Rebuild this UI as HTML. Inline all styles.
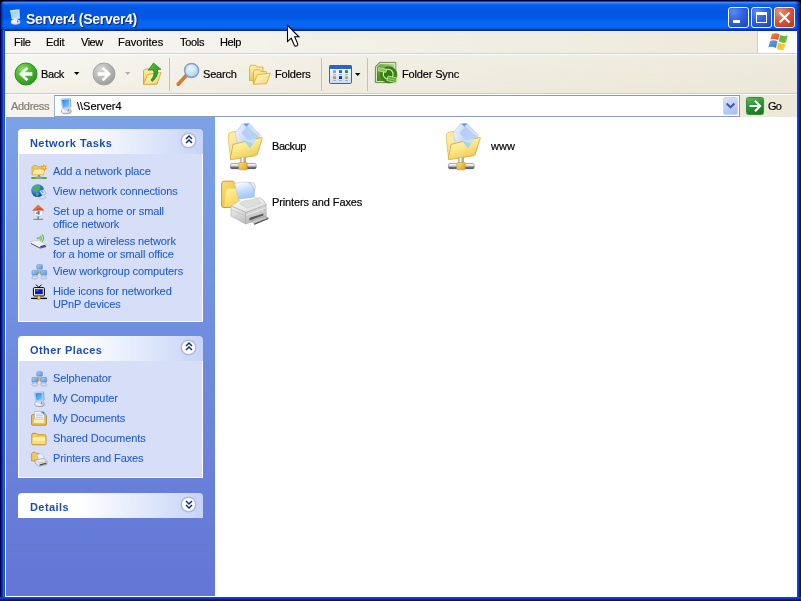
<!DOCTYPE html>
<html>
<head>
<meta charset="utf-8">
<title>Server4</title>
<style>
*{box-sizing:border-box;margin:0;padding:0}
html,body{width:801px;height:601px;overflow:hidden;background:#0a246a}
body{font-family:"Liberation Sans",sans-serif;font-size:11px;color:#000;position:relative}
.abs{position:absolute}
#win{position:absolute;left:0;top:0;width:801px;height:601px;background:#02020c;overflow:hidden}
#frameL{left:0;top:30px;width:5px;height:571px;background:linear-gradient(90deg,#000050 0,#000050 1px,#0a2090 1px,#0a2090 2px,#0838c8 2px,#0838c8 3px,#2060e8 3px,#2060e8 4px,#1a50b8 4px,#1a50b8 5px)}
#frameR{left:797px;top:30px;width:4px;height:571px;background:linear-gradient(90deg,#1a4cb0 0,#1a4cb0 1px,#0a38c0 1px,#0a38c0 2px,#0020a0 2px,#0020a0 3px,#001088 3px,#001088 4px)}
#frameB{left:0;top:597px;width:801px;height:4px;background:linear-gradient(180deg,#1a44a8 0,#1a44a8 1px,#1038c0 1px,#1038c0 2px,#0020a0 2px,#0020a0 3px,#001088 3px,#001088 4px)}
#title{left:0;top:0;width:801px;height:31px;border-radius:7px 7px 0 0;
 background:linear-gradient(180deg,#00003c 0,#00003c 1px,#1240b0 1.5px,#3c8cf8 2.5px,#2478f0 3.5px,#0e66ec 4.5px,#045ce8 6px,#0258e2 10px,#0258e2 18px,#0668f2 22px,#0668f2 26.5px,#0256e0 28.5px,#0030a8 30px,#00208c 31px)}
#ttext{left:26.3px;top:10.6px;font-weight:bold;font-size:14px;color:#fff;text-shadow:1px 1px 1px #0a2070;white-space:nowrap;letter-spacing:-0.3px}
#menubar{left:5px;top:31px;width:792px;height:22px;background:linear-gradient(90deg,#f7f6f2 0,#f2f1e9 40%,#ede9da 100%);border-top:1px solid #f4f8fd}
.mi{position:absolute;top:6px;white-space:nowrap}
#toolbar{left:5px;top:53px;width:792px;height:41px;background:linear-gradient(180deg,rgba(255,255,255,.12) 0,rgba(255,255,255,0) 60%,rgba(240,220,200,.18) 100%),linear-gradient(90deg,#f5f4ee 0,#f0eee3 40%,#ece9d9 100%)}
#addr{left:5px;top:94px;width:792px;height:23px;background:linear-gradient(90deg,#f5f4ee 0,#f0eee3 40%,#ece9d9 100%)}
#side{left:6px;top:117px;width:209px;height:479px;background:linear-gradient(180deg,#7ba2e7 0,#6375d6 100%)}
#main{left:215px;top:117px;width:582px;height:480px;background:#fff}
.t{position:absolute;white-space:nowrap}

.sep{position:absolute;width:1px;background:#c5c2b2}
#flagbox{left:758px;top:31px;width:39px;height:22px;background:#fff}
#abox{left:54px;top:95px;width:686px;height:22px;background:#fff;border:1px solid #7f9db9;border-left-color:#a4b4c8;border-bottom-color:#8c9cb4}
#addd{left:723px;top:97px;width:15px;height:18px;border-radius:2px;background:linear-gradient(160deg,#d6e2fe 0,#bccefa 55%,#a8bcf2 100%);border:1px solid #c8d6fb}
#gobtn{left:746px;top:97px;width:18px;height:18px;border-radius:2.5px;background:linear-gradient(160deg,#5cb860 0,#2c9434 45%,#16741c 100%);border:1px solid #3c8c40;box-shadow:0 0 0 .6px rgba(200,230,196,.8)}
.ph{position:absolute;left:18px;width:185px;height:25px;border-radius:4px 4px 0 0;background:linear-gradient(90deg,#ffffff 0,#ffffff 33%,#c7d4f8 100%)}
.pht{position:absolute;left:30px;font-weight:bold;color:#204eb0;white-space:nowrap;font-size:11px;letter-spacing:.43px}
.pb{position:absolute;left:18px;width:185px;background:#d6dff7;border:1px solid #fff;border-top:none}
.lk{position:absolute;left:53px;color:#215dc6;white-space:nowrap;line-height:13px;letter-spacing:-.1px}
.chev{position:absolute;left:181.3px;width:15px;height:15px;border-radius:8px;background:#fff;border:1.2px solid #b0b2d2;box-shadow:0 0 1px .5px rgba(170,175,215,.7)}
.fl{position:absolute;white-space:nowrap;color:#000}

.cb{position:absolute;top:7px;width:21px;height:21px;border:1px solid #fff;border-radius:3px;
 background:radial-gradient(circle at 25% 20%,#5a8af0 0,#2f63e2 45%,#1a44c4 100%);box-shadow:inset 0 0 1px 0 #1236a8}
.cb.x{background:radial-gradient(circle at 25% 20%,#ee9078 0,#dc5636 45%,#bf3414 100%);box-shadow:inset 0 0 1px 0 #8a2a10}
.mi,.t,.lk,.pht,.fl,#ttext{will-change:transform}
.mi,.t,.fl{-webkit-text-stroke:.18px currentColor}
.lk{-webkit-text-stroke:.08px currentColor}
</style>
</head>
<body>
<div id="win">
 <div id="title" class="abs" style="overflow:hidden">
  <div class="abs" style="left:0;top:0;width:5px;height:31px;background:linear-gradient(90deg,rgba(0,0,60,.95) 0,rgba(0,0,90,.75) 1px,rgba(0,20,150,.35) 2px,rgba(0,30,160,0) 4px)"></div>
  <div class="abs" style="left:795px;top:0;width:6px;height:31px;background:linear-gradient(90deg,rgba(0,30,160,0) 0,rgba(0,25,160,.35) 2px,rgba(0,15,130,.7) 4px,rgba(0,0,80,.95) 6px)"></div>
 </div>
 <div id="ttext" class="abs">Server4 (Server4)</div>
 <div id="frameL" class="abs"></div>
 <div id="frameR" class="abs"></div>
 <div id="frameB" class="abs"></div>
 <div id="menubar" class="abs"></div>
 <div id="toolbar" class="abs"></div>
 <div id="addr" class="abs"></div>
 <div id="side" class="abs"></div>
 <div id="main" class="abs"></div>


 <div class="cb" style="left:728px"><div class="abs" style="left:4px;top:12px;width:7px;height:3px;background:#fff"></div></div>
 <div class="cb" style="left:751px"><div class="abs" style="left:4px;top:4px;width:11px;height:11px;border:1px solid #fff;border-top-width:3px"></div></div>
 <div class="cb x" style="left:774px"><svg class="abs" style="left:0;top:0" width="19" height="19" viewBox="0 0 19 19"><path d="M4.5 4.5 L14.5 14.5 M14.5 4.5 L4.5 14.5" stroke="#fff" stroke-width="2.2" fill="none" stroke-linecap="butt"/></svg></div>
 <div id="flagbox" class="abs"></div>
 <div class="abs" style="left:757px;top:31px;width:1px;height:22px;background:#d4d0c0"></div>
 <svg class="abs" style="left:766px;top:31px" width="24" height="22" viewBox="766 31 24 22">
  <defs>
   <linearGradient id="fr" x1="0" y1="0" x2="1" y2="1"><stop offset="0" stop-color="#f58a4c"/><stop offset="1" stop-color="#e4461c"/></linearGradient>
   <linearGradient id="fg" x1="0" y1="0" x2="1" y2="1"><stop offset="0" stop-color="#5aa83a"/><stop offset="1" stop-color="#7cc848"/></linearGradient>
   <linearGradient id="fb" x1="0" y1="0" x2="1" y2="1"><stop offset="0" stop-color="#6aa8ea"/><stop offset="1" stop-color="#3a74c8"/></linearGradient>
   <linearGradient id="fy" x1="0" y1="0" x2="1" y2="1"><stop offset="0" stop-color="#f4b428"/><stop offset="1" stop-color="#fcd83c"/></linearGradient>

   <radialGradient id="gGlobe" cx="0.35" cy="0.3" r="0.8"><stop offset="0" stop-color="#7cc0f4"/><stop offset="0.5" stop-color="#2c78d8"/><stop offset="1" stop-color="#0c3c9c"/></radialGradient>
   <linearGradient id="gMon" x1="0" y1="0" x2="1" y2="1"><stop offset="0" stop-color="#a8d8fc"/><stop offset="1" stop-color="#4490e4"/></linearGradient>
   <symbol id="net3" viewBox="0 0 16 16" overflow="visible">
    <path d="M8.4 5 L8.4 8.6 M8.4 8.2 L4.6 10 M8.4 8.2 L12.4 10" stroke="#e8a018" stroke-width="1.4" fill="none"/>
    <rect x="7.3" y="6.8" width="2.3" height="2.4" fill="#f4b424" stroke="#a87408" stroke-width="0.3"/>
    <rect x="5.8" y="0.7" width="5.6" height="4.5" rx="0.7" fill="url(#gMon)" stroke="#5c8cd0" stroke-width="0.6"/>
    <ellipse cx="8.6" cy="6" rx="2.4" ry="0.8" fill="#b8bcd4"/>
    <rect x="1" y="6.4" width="5.8" height="4.8" rx="0.7" fill="url(#gMon)" stroke="#5c8cd0" stroke-width="0.6"/>
    <ellipse cx="3.9" cy="13.4" rx="3" ry="1.7" fill="#d8dcec" stroke="#8c90b4" stroke-width="0.5"/>
    <rect x="2.8" y="11.2" width="2.2" height="1.6" fill="#c4c8dc"/>
    <rect x="9.8" y="6.4" width="5.8" height="4.8" rx="0.7" fill="url(#gMon)" stroke="#5c8cd0" stroke-width="0.6"/>
    <ellipse cx="12.7" cy="13.4" rx="3" ry="1.7" fill="#d8dcec" stroke="#8c90b4" stroke-width="0.5"/>
    <rect x="11.6" y="11.2" width="2.2" height="1.6" fill="#c4c8dc"/>
   </symbol>
   <symbol id="fold16" viewBox="0 0 16 16" overflow="visible">
    <path d="M0.8 3.6 Q0.8 2.4 2 2.4 L5.6 2.4 L7 3.8 L13.8 3.8 Q15 3.8 15 5 L15 12.6 Q15 13.8 13.8 13.8 L2 13.8 Q0.8 13.8 0.8 12.6 Z" fill="#f2cc5c" stroke="#c08c1c" stroke-width="0.9"/>
    <path d="M1.6 6.2 L14.2 6.2 L14.2 12.4 Q14.2 13 13.6 13 L2.2 13 Q1.6 13 1.6 12.4 Z" fill="#fceea0"/>
    <path d="M1.6 10 L14.2 10 L14.2 12.4 Q14.2 13 13.6 13 L2.2 13 Q1.6 13 1.6 12.4 Z" fill="#f6d870" opacity=".8"/>
   </symbol>

   <linearGradient id="gNFback" x1="0" y1="0" x2="1" y2="1"><stop offset="0" stop-color="#fdf2a8"/><stop offset="1" stop-color="#f2d068"/></linearGradient>
   <linearGradient id="gNFfront" x1="0.2" y1="0" x2="0.7" y2="1"><stop offset="0" stop-color="#fff8c0"/><stop offset="0.5" stop-color="#fbe684"/><stop offset="1" stop-color="#eec24c"/></linearGradient>
   <linearGradient id="gPaper" x1="0" y1="0" x2="1" y2="0.3"><stop offset="0" stop-color="#f4f8ff"/><stop offset="0.5" stop-color="#c8dcf8"/><stop offset="1" stop-color="#dce8fc"/></linearGradient>
   <linearGradient id="gPipe" x1="0" y1="0" x2="0" y2="1"><stop offset="0" stop-color="#c8c8cc"/><stop offset="0.3" stop-color="#ffffff"/><stop offset="0.65" stop-color="#8c8c94"/><stop offset="1" stop-color="#24242c"/></linearGradient>
   <linearGradient id="gStem" x1="0" y1="0" x2="1" y2="0"><stop offset="0" stop-color="#909098"/><stop offset="0.4" stop-color="#ffffff"/><stop offset="1" stop-color="#787880"/></linearGradient>
   <linearGradient id="gTee" x1="0" y1="0" x2="1" y2="1"><stop offset="0" stop-color="#fce078"/><stop offset="1" stop-color="#dca020"/></linearGradient>
   <pattern id="pStripe" width="2" height="2" patternUnits="userSpaceOnUse" patternTransform="rotate(43)"><rect width="2" height="1" fill="#a4c0f0" opacity=".55"/></pattern>
   <symbol id="netfold" viewBox="0 0 48 52" overflow="visible">
    <path d="M6.2 17 Q6 12.6 9.4 12 L15 11.2 Q16.6 11.2 17.6 12.4 L19 14 L37 13 L37 30 L8.6 39.4 Z" fill="url(#gNFback)" stroke="#e0b850" stroke-width="0.7"/>
    <path d="M13 13.2 L20.2 3.8 L27.2 3.4 L38.6 15.6 L29 29 L16 25 Z" fill="url(#gPaper)" stroke="#b4c8e8" stroke-width="0.6"/>
    <path d="M19.6 13 L25 6.6 L37 16 L29.6 24.6 Z" fill="#b4ccf4" opacity=".55"/><path d="M19.6 13 L25 6.6 L37 16 L29.6 24.6 Z" fill="url(#pStripe)"/>
    <path d="M21.4 3.8 L27.2 3.5 L24.4 6.8 Z" fill="#5c9ce4"/>
    <path d="M11 24.4 L39.6 17.4 Q40.6 17.4 40.2 18.6 L35 34.6 Q34.6 35.6 33.4 35.8 L9.4 39.6 Q8 39.6 8.4 38.2 Z" fill="url(#gNFfront)" stroke="#d4a43c" stroke-width="0.8"/>
    <path d="M22 20.8 L34.6 18.2 L28 28.4 Z" fill="#a8d0f2"/>
    <path d="M22 20.8 L34.6 18.2 L31 23.6 Z" fill="#d4e8fc" opacity=".7"/>
    <rect x="18.4" y="37.6" width="5.2" height="6.4" fill="url(#gStem)"/>
    <rect x="8.4" y="43.4" width="25.8" height="5.4" rx="1.6" fill="url(#gPipe)" stroke="#50505c" stroke-width="0.4"/>
    <rect x="16.8" y="42.4" width="8.4" height="7.4" rx="1.4" fill="url(#gTee)" stroke="#c89420" stroke-width="0.6"/>
   </symbol>

   <linearGradient id="gPFold" x1="0" y1="0" x2="1" y2="1"><stop offset="0" stop-color="#fce078"/><stop offset="1" stop-color="#e4b038"/></linearGradient>
   <linearGradient id="gPFlap" x1="0" y1="0" x2="0.6" y2="1"><stop offset="0" stop-color="#fff4a8"/><stop offset="1" stop-color="#f8d458"/></linearGradient>
   <linearGradient id="gPPaper" x1="0.2" y1="0" x2="0.5" y2="1"><stop offset="0" stop-color="#ffffff"/><stop offset="0.5" stop-color="#c4dcfc"/><stop offset="1" stop-color="#98c4f8"/></linearGradient>
   <linearGradient id="gPTop" x1="0" y1="0" x2="1" y2="1"><stop offset="0" stop-color="#fafafa"/><stop offset="1" stop-color="#dcdcdc"/></linearGradient>
   <linearGradient id="gPLeft" x1="0" y1="0" x2="0.4" y2="1"><stop offset="0" stop-color="#f4f4f4"/><stop offset="1" stop-color="#c4c4c4"/></linearGradient>
   <linearGradient id="gPRight" x1="0" y1="0" x2="0.3" y2="1"><stop offset="0" stop-color="#e4e4e4"/><stop offset="1" stop-color="#b8b8b8"/></linearGradient>
   <symbol id="printer" viewBox="0 0 50 50" overflow="visible">
    <path d="M1.6 6 Q1.6 3.4 4 3.2 L12 3 Q13.6 3 14.4 4.4 L18 9 L19 29 L3.6 29.6 Q1.6 29.4 1.6 27.6 Z" fill="url(#gPFold)" stroke="#c49428" stroke-width="0.9"/>
    <path d="M6.2 12.4 Q6.8 10.6 8.6 10.6 L19 10.4 L19 28.4 L4.2 28.8 Z" fill="url(#gPFlap)"/>
    <path d="M14.6 5.4 Q22 3.2 28.4 4.4 Q33 7.6 34.6 12.6 L34.2 19.4 L18.8 21.6 Z" fill="url(#gPPaper)" stroke="#b4c4dc" stroke-width="0.6"/>
    <path d="M28.4 4.4 Q33.4 6.4 34.6 12.6 Q36.2 9 34.4 5.6 Q31.6 4 28.4 4.4 Z" fill="#e8f0fc" stroke="#98a8c0" stroke-width="0.5"/>
    <path d="M11 28 L21.4 21.2 L40 19.8 Q44 21.4 46.2 26.8 L26 34.4 Z" fill="url(#gPTop)" stroke="#b4b4b4" stroke-width="0.6"/>
    <path d="M19.6 25.6 L24.4 22.4 L37.6 21.2 L41 25 L27.4 30.2 Z" fill="#dedede" stroke="#c4c4c4" stroke-width="0.5"/>
    <path d="M18.6 21.6 L34.2 19.6 L35.4 20.4 L22 22.8 Z" fill="#fcfcfc"/>
    <path d="M11 28 L26 34.4 L25.6 46 L11 38 Z" fill="url(#gPLeft)" stroke="#a8a8a8" stroke-width="0.6"/>
    <path d="M11 31.6 L25.8 38.2" stroke="#c0c0c0" stroke-width="0.7"/>
    <path d="M26 34.4 L46.2 26.8 L46.2 39 L25.6 46 Z" fill="url(#gPRight)" stroke="#a8a8a8" stroke-width="0.6"/>
    <path d="M26 37.4 L46.2 30" stroke="#f4f4f4" stroke-width="0.7"/>
    <path d="M29.4 40 L43.4 35.4 L43.4 37.6 L29.4 42.4 Z" fill="#585858"/>
    <path d="M31 43 L44.8 38.6 L48.4 39.8 L34.2 45.6 Z" fill="#c8c8c8" stroke="#8c8c8c" stroke-width="0.5"/>
    <path d="M34.2 45.6 L48.4 39.8 L48.4 41 L34.2 47 Z" fill="#585858"/>
    <circle cx="44.4" cy="31.6" r="0.7" fill="#7cc07c"/>
   </symbol>
  </defs>
  <path d="M771.9 33.9 Q775.6 32.3 779.5 34.2 L778 40 Q774.2 38.2 770.4 39.6 Z" fill="url(#fr)"/>
  <path d="M780.3 34.9 Q784 36.8 787.7 35.2 L786 42.4 Q782.4 43.8 778.8 41.2 Z" fill="url(#fg)"/>
  <path d="M770 40.9 Q773.8 39.5 777.5 41.3 L776 47.9 Q772.2 46 768.4 47.2 Z" fill="url(#fb)"/>
  <path d="M778.4 42.4 Q782 44.6 785.6 43.6 L783.8 49.8 Q780.4 51 776.9 48.8 Z" fill="url(#fy)"/>
 </svg>
 <div class="abs" style="left:5px;top:53px;width:792px;height:1px;background:#d8d2bd"></div>
 <div class="abs" style="left:5px;top:54px;width:792px;height:1px;background:#fff"></div>
 <div class="mi" style="left:14px;top:36px;letter-spacing:-.25px" id="m1">File</div>
 <div class="mi" style="left:46px;top:36px;letter-spacing:-.1px" id="m2">Edit</div>
 <div class="mi" style="left:80.8px;top:36px;letter-spacing:-.5px" id="m3">View</div>
 <div class="mi" style="left:118.2px;top:36px" id="m4">Favorites</div>
 <div class="mi" style="left:179.8px;top:36px;letter-spacing:-.3px" id="m5">Tools</div>
 <div class="mi" style="left:220.4px;top:36px;letter-spacing:-.4px" id="m6">Help</div>

 <div class="t" style="left:41px;top:68px;letter-spacing:-.4px" id="tb1">Back</div>
 <div class="t" style="left:203.2px;top:68px;letter-spacing:-.2px" id="tb2">Search</div>
 <div class="t" style="left:275.2px;top:68px;letter-spacing:-.17px" id="tb3">Folders</div>
 <div class="t" style="left:402.2px;top:68px;letter-spacing:-.15px" id="tb4">Folder Sync</div>
 <div class="sep" style="left:169px;top:58px;height:33px"></div>
 <div class="sep" style="left:321px;top:58px;height:33px"></div>
 <div class="sep" style="left:367px;top:58px;height:33px"></div>

 <div class="abs" style="left:5px;top:93px;width:792px;height:1px;background:#d0cdbd"></div>
 <div class="abs" style="left:5px;top:94px;width:792px;height:1px;background:#fff"></div>
 <div class="t" style="left:10.8px;top:99.6px;color:#7f7c73;letter-spacing:-.3px" id="ad1">Address</div>
 <div id="abox" class="abs"></div>
 <div class="t" style="left:77px;top:100.4px" id="ad2">\\Server4</div>
 <div id="addd" class="abs"></div>
 <div id="gobtn" class="abs"></div>
 <div class="t" style="left:768.4px;top:100px;letter-spacing:-.7px" id="ad3">Go</div>

 <div class="abs" style="left:5px;top:117px;width:1px;height:480px;background:#fff"></div>
 <div class="abs" style="left:5px;top:596px;width:210px;height:1px;background:#fff"></div>

 <div class="ph" style="top:129px"></div>
 <div class="pht" style="top:137px" id="h1">Network Tasks</div>
 <div class="chev" style="top:132.5px"></div>
 <div class="pb" style="top:154px;height:168px"></div>
 <div class="lk" style="top:165px" id="l1">Add a network place</div>
 <div class="lk" style="top:185px" id="l2">View network connections</div>
 <div class="lk" style="top:205px" id="l3">Set up a home or small<br>office network</div>
 <div class="lk" style="top:235px" id="l4">Set up a wireless network<br>for a home or small office</div>
 <div class="lk" style="top:265px" id="l5">View workgroup computers</div>
 <div class="lk" style="top:285px" id="l6">Hide icons for networked<br>UPnP devices</div>

 <div class="ph" style="top:336px"></div>
 <div class="pht" style="top:344px" id="h2">Other Places</div>
 <div class="chev" style="top:339.5px"></div>
 <div class="pb" style="top:361px;height:117px"></div>
 <div class="lk" style="top:372px" id="l7">Selphenator</div>
 <div class="lk" style="top:392px" id="l8">My Computer</div>
 <div class="lk" style="top:412px" id="l9">My Documents</div>
 <div class="lk" style="top:432px" id="l10">Shared Documents</div>
 <div class="lk" style="top:452px" id="l11">Printers and Faxes</div>

 <div class="ph" style="top:493px"></div>
 <div class="pht" style="top:501px" id="h3">Details</div>
 <div class="chev" style="top:496.5px"></div>

 <div class="fl" style="left:272px;top:140px;letter-spacing:-.45px" id="f1">Backup</div>
 <div class="fl" style="left:490.5px;top:140px" id="f2">www</div>
 <div class="fl" style="left:272px;top:196px;letter-spacing:-.12px" id="f3">Printers and Faxes</div>

 <svg id="icons" class="abs" style="left:0;top:0;pointer-events:none" width="801" height="601" viewBox="0 0 801 601">
  <defs>
   <radialGradient id="gBack" cx="0.35" cy="0.3" r="0.8"><stop offset="0" stop-color="#8fdc68"/><stop offset="0.45" stop-color="#4db830"/><stop offset="1" stop-color="#22901a"/></radialGradient>
   <radialGradient id="gFwd" cx="0.35" cy="0.3" r="0.8"><stop offset="0" stop-color="#d6d6d4"/><stop offset="0.5" stop-color="#b8b8b6"/><stop offset="1" stop-color="#969694"/></radialGradient>
   <linearGradient id="gFold" x1="0" y1="0" x2="1" y2="1"><stop offset="0" stop-color="#fffcd4"/><stop offset="1" stop-color="#f4d466"/></linearGradient>
   <linearGradient id="gFoldB" x1="0" y1="0" x2="0" y2="1"><stop offset="0" stop-color="#fdf0a4"/><stop offset="1" stop-color="#eec658"/></linearGradient>
   <linearGradient id="gUp" x1="0" y1="0" x2="1" y2="1"><stop offset="0" stop-color="#58c838"/><stop offset="1" stop-color="#1a8818"/></linearGradient>

   <radialGradient id="gLens" cx="0.4" cy="0.35" r="0.7"><stop offset="0" stop-color="#e8f8ff"/><stop offset="1" stop-color="#a4d4f2"/></radialGradient>
   <linearGradient id="gHandle" x1="0" y1="0" x2="1" y2="1"><stop offset="0" stop-color="#f0a850"/><stop offset="1" stop-color="#b86010"/></linearGradient>
   <linearGradient id="gView" x1="0" y1="0" x2="0" y2="1"><stop offset="0" stop-color="#ffffff"/><stop offset="1" stop-color="#c4dcfa"/></linearGradient>
   <linearGradient id="gSync" x1="1" y1="0" x2="0" y2="1"><stop offset="0" stop-color="#c4deb0"/><stop offset="0.45" stop-color="#74ac48"/><stop offset="1" stop-color="#3c7c14"/></linearGradient>

   <linearGradient id="gScr" x1="0" y1="0" x2="1" y2="1"><stop offset="0" stop-color="#2a86e8"/><stop offset="0.6" stop-color="#58b0f4"/><stop offset="1" stop-color="#98d8fc"/></linearGradient>
   <linearGradient id="gScrL" x1="0" y1="0" x2="1" y2="1"><stop offset="0" stop-color="#8cd0f4"/><stop offset="1" stop-color="#b8e4fc"/></linearGradient>
   <radialGradient id="gBase" cx="0.35" cy="0.35" r="0.8"><stop offset="0" stop-color="#ffffff"/><stop offset="0.6" stop-color="#e0e0ec"/><stop offset="1" stop-color="#a8a4c4"/></radialGradient>
   <symbol id="pc" viewBox="0 0 16 16" overflow="visible">
    <ellipse cx="8.4" cy="13.4" rx="5.2" ry="2.9" fill="#7c78a8" opacity=".55"/><ellipse cx="8.2" cy="13" rx="5" ry="2.8" fill="url(#gBase)" stroke="#9090b4" stroke-width="0.5"/>
    <path d="M6.4 10 L10 10 L10.6 12.6 L6 12.6 Z" fill="#d4d4e4"/>
    <path d="M10 10.4 L11.6 12.8 L9.6 13.6 Z" fill="#6c5c8c" opacity=".7"/>
    <path d="M2.8 0.9 L12 0.2 L12.6 9.6 L4.2 10.4 Z" fill="#c4daf4" stroke="#9cb8e0" stroke-width="0.5"/>
    <path d="M3.9 1.9 L11 1.3 L11.5 8.7 L5 9.4 Z" fill="url(#gScr)"/>
    <path d="M12 0.2 L13 1 L13.4 9 L12.6 9.6 Z" fill="#8c9cc0"/>
   </symbol>
   <symbol id="pcl" viewBox="0 0 16 16" overflow="visible">
    <ellipse cx="8.2" cy="13" rx="4.8" ry="2.8" fill="url(#gBase)"/>
    <path d="M6.4 10 L10 10 L10.6 12.6 L6 12.6 Z" fill="#e8e8f4"/>
    <path d="M10 10.6 L11.4 12.8 L9.6 13.8 Z" fill="#5c4c8c" opacity=".75"/>
    <path d="M2.6 1.2 L12 0.2 L12.6 9.4 L4.4 10.4 Z" fill="#d0ecfc"/>
    <path d="M3.8 2.4 L11 1.6 L11.4 8.4 L5.2 9.2 Z" fill="url(#gScrL)"/>
   </symbol>
  </defs>

  <!-- title + address icons -->
  <use href="#pcl" x="7.4" y="9" width="16" height="16"/>
  <use href="#pc" x="58" y="98" width="16" height="16"/>

  <!-- address dropdown chevron + go arrow -->
  <path d="M726.6 103.4 L730.5 107.3 L734.4 103.4" fill="none" stroke="#4a5c9c" stroke-width="2.1"/>
  <path d="M749.6 106 L759 106 M755 100.8 L760.2 106 L755 111.2" fill="none" stroke="#fff" stroke-width="2"/>

  <!-- panel chevrons -->
  <g fill="none" stroke="#10307c" stroke-width="1.5">
   <path d="M186 139 L189 136 L192 139 M186 143 L189 140 L192 143"/>
   <path d="M186 346 L189 343 L192 346 M186 350 L189 347 L192 350"/>
   <path d="M186 501 L189 504 L192 501 M186 505 L189 508 L192 505"/>
  </g>

  <!-- SIDEBAR ICONS -->
  <g id="sideicons">
   <!-- 1 add network place (31..47,164..180) -->
   <path d="M32 178 L46 178" stroke="#58a838" stroke-width="1.8" stroke-linecap="round"/>
   <path d="M39 174 L39 178" stroke="#787878" stroke-width="1.6"/>
   <path d="M36 176.6 L42 176.6 L42.6 178.4 L35.4 178.4 Z" fill="#a0a0a0"/>
   <path d="M32 166.8 L33.2 165.4 L36.6 165.4 L37.6 166.6 L43.4 166.6 L43.4 174.6 L32 174.6 Z" fill="#eec660" stroke="#c89c34" stroke-width="0.6"/>
   <path d="M34 169.2 L45.4 168.4 L43.4 174.8 L32 174.8 Z" fill="#fcec9c" stroke="#d4a83c" stroke-width="0.6"/>
   <path d="M43.6 163.8 L44.6 165.8 L46.8 165.4 L45.8 167.4 L47.2 169.2 L45 169.2 L44 171.2 L43 169.2 L40.8 169.4 L42 167.6 L40.8 165.6 L43 166 Z" fill="#f48c1c"/>
   <circle cx="44" cy="167.4" r="1.5" fill="#fcd43c"/>
   <!-- 2 view network connections (31..46,184..199) -->
   <circle cx="37.6" cy="190.6" r="6.4" fill="url(#gGlobe)"/>
   <path d="M34.6 186 Q37.6 184.6 40 186.2 Q41 188 39 189 Q37 188.6 36.4 190.6 Q34.6 191.6 33 189.6 Q33 187.4 34.6 186 Z" fill="#4cb444"/>
   <path d="M36 193 Q38 192.4 39 194 Q38.6 196 37 196.6 Q35.6 195 36 193 Z" fill="#4cb444"/>
   <path d="M39.6 191 L44 189.6 L46.2 193.6 L42 195.2 Z" fill="#d4e8fc" stroke="#88a8d8" stroke-width="0.6"/>
   <path d="M42.4 195 Q45 196 46 197.6 Q43 199.4 38.6 198.6" fill="none" stroke="#bcd0ec" stroke-width="1.5"/>
   <path d="M41 191.8 L43 191.2 M41.6 193 L43.6 192.4" stroke="#4c78c0" stroke-width="0.6"/>
   <!-- 3 home network (32..44,204..220) -->
   <path d="M34 219.4 L42.4 219.4" stroke="#68a84c" stroke-width="1.4" stroke-linecap="round"/>
   <path d="M38.2 215 L38.2 219" stroke="#7c7c84" stroke-width="1.4"/>
   <circle cx="38.4" cy="212" r="4.6" fill="#dce4f4" stroke="#9cacd0" stroke-width="0.6"/>
   <path d="M34.6 210.4 L42.4 210.4 L42.4 215.4 L34.6 215.4 Z" fill="#f8f8fc"/>
   <path d="M32.2 210.8 L38 204.8 L44.6 210.4 Z" fill="#e05420"/>
   <path d="M33 210.2 L38 205.2 L41 207.4 L36 209 Z" fill="#ec7038"/>
   <rect x="37.6" y="211" width="2" height="3.6" fill="#4c74c4"/>
   <rect x="36" y="212.4" width="1.6" height="1.4" fill="#4c74c4"/>
   <!-- 4 wireless (31..46,235..249) -->
   <path d="M31 241.6 L38 240.2 L46 244.4 L46 246.8 L40 248.4 L31 243.6 Z" fill="#f4f4f8" stroke="#b4b4c8" stroke-width="0.5"/>
   <path d="M31 243 L40 247.4 L46 245.8 L46 247 L40 248.6 L31 244 Z" fill="#54587c"/>
   <path d="M40.4 246 L45.4 244.8 L45.4 246.4 L40.4 247.6 Z" fill="#3c3c8c"/>
   <path d="M38.8 236.8 Q39.8 238 38.8 239.4 M40.6 235.6 Q42.2 238 40.6 240.6 M42.4 234.6 Q44.6 238 42.4 241.6" fill="none" stroke="#5cbc2c" stroke-width="1.1"/>
   <circle cx="37.4" cy="238.2" r="0.8" fill="#5cbc2c"/>
   <!-- 5 workgroup -->
   <use href="#net3" x="31" y="264" width="16" height="16"/>
   <!-- 6 UPnP (31..47,284..300) -->
   <path d="M36 284.6 L38.8 287.4 L41.6 284.6" fill="none" stroke="#000" stroke-width="1"/>
   <rect x="33.4" y="287.6" width="11" height="8.4" rx="1" fill="#f0ece0" stroke="#000" stroke-width="1"/>
   <rect x="35" y="289.2" width="7.8" height="5" fill="#0c14c4"/>
   <rect x="35.6" y="289.8" width="3" height="1.4" fill="#3c6cf0"/>
   <path d="M31 298.4 L47 298.4" stroke="#000" stroke-width="1.3"/>
   <rect x="37.6" y="296" width="2.6" height="3.6" fill="#f0d020" stroke="#7c6c00" stroke-width="0.4"/>
   <!-- 7 selphenator -->
   <use href="#net3" x="31" y="371" width="16" height="16"/>
   <!-- 8 my computer -->
   <use href="#pc" x="31.6" y="391.4" width="15.4" height="15.4"/>
   <!-- 9 my documents (31..46.5,411..426) -->
   <path d="M31.6 415.6 Q31.6 414.6 32.6 414.6 L45.4 414.6 Q46.4 414.6 46.4 415.6 L46.4 424 Q46.4 425.2 45.2 425.2 L32.8 425.2 Q31.6 425.2 31.6 424 Z" fill="#eec458" stroke="#b8841c" stroke-width="0.9"/>
   <path d="M34.4 411.6 L42.6 411.6 L44.6 413.4 L44.6 421 L34.4 421 Z" fill="#fcfcff" stroke="#8ca4d0" stroke-width="0.6"/>
   <path d="M40.6 411.8 L44.4 411.8 L44.4 415 Z" fill="#3c7cd8"/>
   <path d="M36 414 L42 414 M36 415.8 L43 415.8 M36 417.6 L43 417.6" stroke="#9cb4d8" stroke-width="0.7"/>
   <path d="M33.4 419 L44.6 419 L44.6 423.4 L33.4 423.4 Z" fill="#fcf0b0" stroke="#d4a838" stroke-width="0.5"/>
   <!-- 10 shared documents -->
   <use href="#fold16" x="31" y="431" width="16" height="16"/>
   <!-- 11 printers and faxes (31..47,452..466) -->
   <path d="M31.6 453.6 L32.6 452.4 L35.6 452.4 L36.4 453.4 L39 453.4 L39 461 L31.6 461 Z" fill="#f0c85c" stroke="#b88820" stroke-width="0.7"/>
   <path d="M37 454.6 L42.6 453.6 L44.6 459.6 L38.6 460.6 Z" fill="#e4f0fc" stroke="#a4b8d8" stroke-width="0.5"/>
   <path d="M35 460 L44 458.4 L47 461.4 L47 464.4 L39 466.4 L35 463 Z" fill="#e8e8ec" stroke="#8c8c98" stroke-width="0.6"/>
   <path d="M35 460 L39 463 L47 461.2" fill="none" stroke="#a8a8b4" stroke-width="0.6"/>
   <path d="M39.6 464.2 L46.4 462.6 L46.4 464 L39.6 465.8 Z" fill="#50505c"/>
  </g>

  <!-- MAIN ICONS -->
  <use href="#netfold" x="222" y="120" width="48" height="52"/>
  <use href="#netfold" x="440" y="120" width="48" height="52"/>
  <use href="#printer" x="220" y="178" width="50" height="50"/>
  <!-- TOOLBAR -->
  <g id="tbicons">
   <circle cx="26" cy="74" r="11" fill="url(#gBack)" stroke="#2f8f22" stroke-width="1"/>
   <path d="M19 74 L26.5 66.8 L28.3 68.7 L24.6 72.2 L32.3 72.2 L32.3 75.8 L24.6 75.8 L28.3 79.3 L26.5 81.2 Z" fill="#fff"/>
   <path d="M74 72 L79.4 72 L76.7 75 Z" fill="#000"/>
   <circle cx="104" cy="74" r="11" fill="url(#gFwd)" stroke="#a4a4a2" stroke-width="1"/>
   <path d="M111 74 L103.5 66.8 L101.7 68.7 L105.4 72.2 L97.7 72.2 L97.7 75.8 L105.4 75.8 L101.7 79.3 L103.5 81.2 Z" fill="#fff"/>
   <path d="M125 72 L130.4 72 L127.7 75 Z" fill="#b4b2a6"/>
   <!-- up folder -->
   <path d="M143.5 70.5 L146 69 L151 69 L152.5 70.5 L157 70.5 L157 84 L143.5 84 Z" fill="url(#gFoldB)" stroke="#c89a30" stroke-width="0.8"/>
   <path d="M147.5 74.5 L161 72.5 L157 84 L143.5 84.4 Z" fill="url(#gFold)" stroke="#d0a030" stroke-width="0.8"/>
   <path d="M153.5 63 L160.8 69.2 L157.3 69.4 Q159 76 152.2 81.4 L151 80 Q155.5 75 153.4 69.8 L148.2 70.2 Z" fill="url(#gUp)" stroke="#18781a" stroke-width="0.7"/>

   <!-- search -->
   <path d="M186 75.6 L178.2 84.2" stroke="url(#gHandle)" stroke-width="3.6" stroke-linecap="round"/>
   <path d="M186 75.6 L178.2 84.2" stroke="#c87828" stroke-width="3.6" stroke-linecap="round" opacity=".35"/>
   <circle cx="191.6" cy="70.4" r="7" fill="url(#gLens)" stroke="#8c9cc4" stroke-width="1.5"/>
   <!-- folders -->
   <path d="M249.5 67.5 L250.8 65.3 L255.4 65.3 L256.8 67 L263 67 L263 80.6 L249.5 80.6 Z" fill="url(#gFoldB)" stroke="#d4a838" stroke-width="0.8"/>
   <path d="M253.4 72 L254.6 69.8 L259.6 69.8 L261 71.6 L266.4 71.6 L266.4 74 L253.4 84 Z" fill="url(#gFoldB)" stroke="#d4a838" stroke-width="0.8"/>
   <path d="M257.6 74.6 L270.4 73.2 L266.6 83.6 L253.4 84.4 Z" fill="url(#gFold)" stroke="#d8ac38" stroke-width="0.8"/>
   <!-- views -->
   <rect x="329.5" y="65.5" width="22" height="18" rx="1.2" fill="url(#gView)" stroke="#2c64c8" stroke-width="1"/>
   <rect x="329.5" y="65.5" width="22" height="3" rx="1" fill="#2c64c8" stroke="#2c64c8" stroke-width="1"/>
   <rect x="333" y="70.2" width="3" height="2.8" fill="#9c9ccc"/><rect x="339" y="70.2" width="3" height="2.8" fill="#2a68c0"/><rect x="345" y="70.2" width="3" height="2.8" fill="#1a983a"/>
   <rect x="333" y="74" width="3" height="0.8" fill="#9aa4b8"/><rect x="339" y="74" width="3" height="0.8" fill="#9aa4b8"/><rect x="345" y="74" width="3" height="0.8" fill="#9aa4b8"/>
   <rect x="333" y="76.2" width="3" height="2.8" fill="#e88452"/><rect x="339" y="76.2" width="3" height="2.8" fill="#103a90"/><rect x="345" y="76.2" width="3" height="2.8" fill="#d4a840"/>
   <rect x="333" y="80" width="3" height="0.8" fill="#9aa4b8"/><rect x="339" y="80" width="3" height="0.8" fill="#9aa4b8"/><rect x="345" y="80" width="3" height="0.8" fill="#9aa4b8"/>
   <path d="M355 73 L360.4 73 L357.7 76 Z" fill="#000"/>
   <!-- folder sync -->
   <path d="M379.4 62.4 L395.8 62.4 L395.8 82.6 L375.4 82.6 L375.4 66.6 Z" fill="url(#gSync)" stroke="#6e8c50" stroke-width="0.9"/>
   <path d="M379.9 63.6 L394.7 63.6 L394.7 81.5 L376.5 81.5 L376.5 67.2 Z" fill="none" stroke="#e4f2d0" stroke-width="0.9"/>
   <circle cx="388.8" cy="74.8" r="8.2" fill="#3e8412"/>
   <circle cx="388.8" cy="74.8" r="8.2" fill="none" stroke="#2f7008" stroke-width="0.6"/>
   <circle cx="388.2" cy="74.2" r="4.9" fill="#2e7a0a" stroke="#c4eea4" stroke-width="1.2"/>
   <path d="M378.8 67.6 L386.6 69.2 L386 72.4 L378.2 70.8 Z" fill="#86c454" stroke="#c8f0a8" stroke-width="0.7"/>
   <path d="M388 76 L397 78 L396 82.6 L387 80.6 Z" fill="#62a232" stroke="#c8f0a8" stroke-width="0.8"/>
   <path d="M387.6 78.4 L396.4 80.3" stroke="#a8dc80" stroke-width="0.7"/>
  </g>
  <!-- cursor -->
  <path d="M287.5 25.4 L287.5 41.6 L291.2 38.2 L294.3 45.3 Q295.4 46.6 297 45.7 Q298.2 44.8 297.6 43.6 L294.7 36.8 L298.9 36.8 Z" fill="#fff" stroke="#000" stroke-width="1.1" stroke-linejoin="miter"/>
 </svg>
</div>
</body>
</html>
